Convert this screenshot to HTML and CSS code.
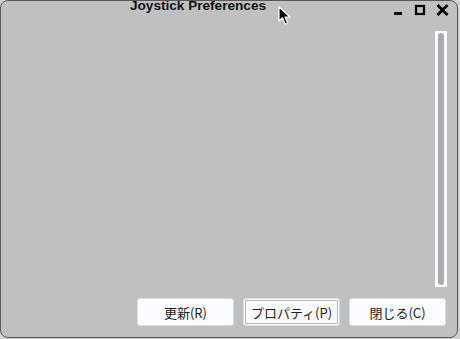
FILE: index.html
```html
<!DOCTYPE html>
<html lang="ja">
<head>
    <meta charset="UTF-8">
    <meta name="viewport" content="width=device-width, initial-scale=1.0">
    <title>Joystick Preferences</title>
    <link rel="stylesheet" href="styles.css">
</head>
<body>

    <!-- Window -->
    <div class="window">

        <!-- Title bar -->
        <div class="titlebar">
            <div class="title">Joystick Preferences</div>
            <div class="controls">
                <span class="ctl">
                    <svg width="22" height="20" viewBox="0 0 22 20"><rect x="7" y="11" width="8" height="3" fill="#000"/></svg>
                </span>
                <span class="ctl">
                    <svg width="22" height="20" viewBox="0 0 22 20"><rect x="7" y="5" width="8" height="8" fill="none" stroke="#000" stroke-width="2.2"/></svg>
                </span>
                <span class="ctl">
                    <svg width="22" height="20" viewBox="0 0 22 20"><path d="M6.5 4 L16.5 14 M16.5 4 L6.5 14" stroke="#000" stroke-width="2.8"/></svg>
                </span>
            </div>
        </div>

        <!-- Device list -->
        <div class="content">
            <div class="scrollbar"><div class="thumb"></div></div>
        </div>

        <!-- Buttons -->
        <div class="actions">
            <button class="btn">更新(R)</button>
            <button class="btn focused">プロパティ(P)</button>
            <button class="btn">閉じる(C)</button>
        </div>
    </div>

    <!-- Mouse pointer -->
    <svg class="cursor" width="14" height="20" viewBox="0 0 14 20">
        <path d="M1 1 L1 15 L4.5 11.8 L7.2 18 L9.6 17 L7 11 L12 11 Z" fill="#000" stroke="#fff" stroke-width="1.2" stroke-linejoin="round"/>
    </svg>

</body>
</html>
```

FILE: styles.css
```css
/* General styles */
body {
    margin: 0;
    padding: 0;
    background-color: #d0d0d0;
    font-family: 'Noto Sans CJK JP', 'Liberation Sans', sans-serif;
    width: 460px;
    height: 339px;
    overflow: hidden;
}

/* Window frame */
.window {
    width: 458px;
    height: 338px;
    box-sizing: border-box;
    background-color: #c0c0c0;
    border: 1px solid #585858;
    border-radius: 8px;
    display: flex;
    flex-direction: column;
    overflow: hidden;
}

/* Title bar */
.titlebar {
    height: 30px;
    display: flex;
    align-items: flex-start;
}
.title {
    flex: 1;
    margin-top: -2px;
    padding-left: 8px;
    text-align: center;
    font-family: 'Liberation Sans', sans-serif;
    font-weight: bold;
    font-size: 13.6px;
    line-height: 14px;
    color: #111;
}
.controls {
    display: flex;
    padding-right: 4px;
}
.ctl {
    width: 22px;
    height: 20px;
}
.ctl svg {
    display: block;
}

/* Content area */
.content {
    flex: 1;
    display: flex;
    justify-content: flex-end;
    padding-right: 10px;
}
.scrollbar {
    width: 12px;
    box-sizing: border-box;
    padding: 2px 3px;
    background-color: #ffffff;
    display: flex;
}
.thumb {
    flex: 1;
    background-color: #a9a9b1;
    border-radius: 3px;
}

/* Buttons */
.actions {
    display: flex;
    justify-content: flex-end;
    gap: 9px;
    padding: 11px 11px 11px 0;
}
.btn {
    width: 97px;
    height: 28px;
    box-sizing: border-box;
    background-color: #fbfcff;
    border: 1px solid #d8dce8;
    border-radius: 3px;
    font-family: 'Noto Sans CJK JP', sans-serif;
    font-size: 13px;
    color: #222;
    padding: 0;
}
.btn.focused {
    outline: 1px solid #b4b8cc;
    outline-offset: -3px;
}

/* Pointer */
.cursor {
    position: absolute;
    left: 278px;
    top: 6px;
}
```
